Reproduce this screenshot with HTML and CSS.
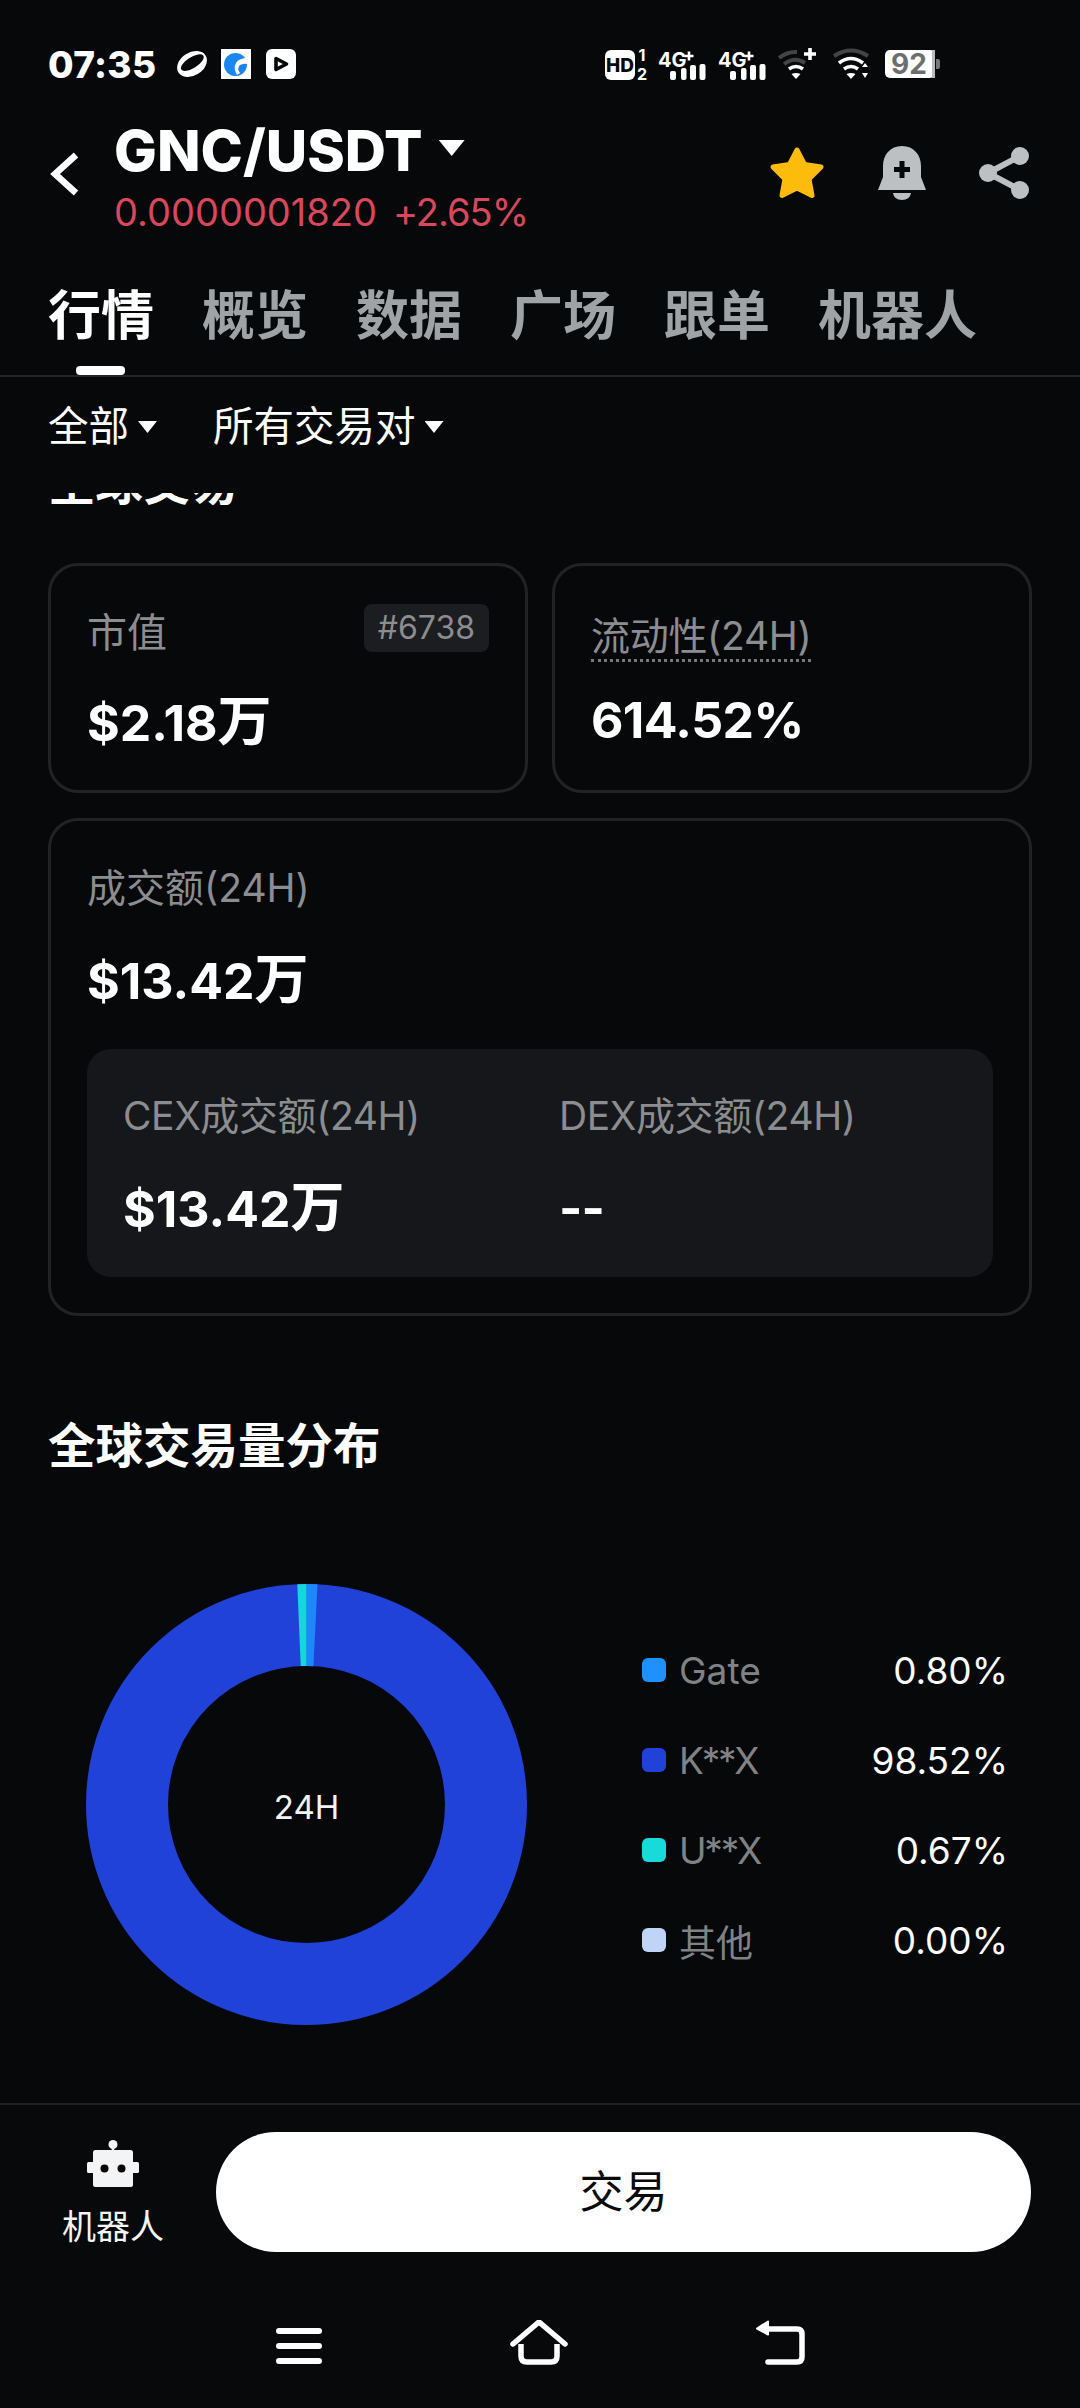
FILE: index.html
```html
<!DOCTYPE html>
<html lang="zh">
<head>
<meta charset="utf-8">
<title>GNC/USDT</title>
<link rel="stylesheet" href="styles.css">
</head>
<body>
<div class="app">
  <div class="status">
    <span class="time">07:35</span>
    <svg class="si orbit" width="32" height="30" viewBox="0 0 32 30"><g transform="rotate(-32 16 15)"><ellipse cx="16" cy="15" rx="16" ry="11.500" fill="#fff"/><ellipse cx="17" cy="14" rx="13" ry="5.500" fill="#060809"/></g></svg>
    <svg class="si blue" width="30" height="30" viewBox="0 0 30 30"><rect width="30" height="30" fill="#fff"/><circle cx="14.500" cy="15.500" r="11.500" fill="#1a86ee"/><path d="M27 9 Q18 9 15 14 Q12 19 16 26 L19 24 Q16 20 18.500 16.500 Q21 14 27 15Z" fill="#fff"/><path d="M17 20 L25 16.500 Q25 21 20 24Z" fill="#1a86ee"/></svg>
    <svg class="si play" width="30" height="30" viewBox="0 0 30 30"><rect width="30" height="30" rx="6" fill="#fff"/><path d="M10 9.500 L20.500 15 L10 20.500Z" fill="none" stroke="#060809" stroke-width="3.600" stroke-linejoin="round"/></svg>
    <span class="status-gap"></span>
    <svg class="si hd" width="43" height="44" viewBox="0 -7 43 44"><rect y="1" width="30" height="30" rx="6" fill="#fff"/><text x="15" y="23" class="hd-t">HD</text><text x="37" y="12" class="sim-t">1</text><text x="37" y="31" class="sim-t">2</text></svg>
    <svg class="si sig" width="48" height="44" viewBox="0 -7 48 44"><text x="0" y="18" class="g-t">4G</text><path d="M26.500 7h9M31 2.500v9" stroke="#fff" stroke-width="2.600"/><rect x="12" y="22" width="6" height="9" rx="2" fill="#fff"/><rect x="23" y="19" width="5.500" height="12" rx="2" fill="#fff"/><rect x="32" y="16" width="6" height="15" rx="2" fill="#fff"/><rect x="41.500" y="15" width="6" height="16" rx="2" fill="#fff"/></svg>
    <svg class="si sig2" width="48" height="44" viewBox="0 -7 48 44"><text x="0" y="18" class="g-t">4G</text><path d="M26.500 7h9M31 2.500v9" stroke="#fff" stroke-width="2.600"/><rect x="12" y="22" width="6" height="9" rx="2" fill="#fff"/><rect x="23" y="19" width="5.500" height="12" rx="2" fill="#fff"/><rect x="32" y="16" width="6" height="15" rx="2" fill="#fff"/><rect x="41.500" y="15" width="6" height="16" rx="2" fill="#fff"/></svg>
    <svg class="si wifi1" width="38" height="32" viewBox="0 0 38 32"><path d="M1 10 Q9 3.500 19 4" fill="none" stroke="#444" stroke-width="4"/><path d="M6 16 Q17 8 27 15" fill="none" stroke="#444" stroke-width="4"/><path d="M11 21 Q18 16 25 21" fill="none" stroke="#fff" stroke-width="3.600"/><path d="M13.500 26 L18 31 L22.500 26 Q18 24 13.500 26Z" fill="#fff"/><path d="M26 6h12M32 0v12" stroke="#fff" stroke-width="3.600"/></svg>
    <svg class="si wifi2" width="37" height="32" viewBox="0 0 37 32"><path d="M1 8 Q18 -3 35 8" fill="none" stroke="#444" stroke-width="4"/><path d="M6 15 Q18 6 30 15" fill="none" stroke="#fff" stroke-width="3.600"/><path d="M11 21 Q18 16 25 21" fill="none" stroke="#fff" stroke-width="3.600"/><path d="M13.500 26 L18 31 L22.500 26 Q18 24 13.500 26Z" fill="#fff"/><path d="M29 19 L32 15 L35 19Z M29 25 L32 30 L35 25Z" fill="#fff"/></svg>
    <svg class="si bat" width="55" height="44" viewBox="0 -8 55 44"><rect width="50" height="28" rx="5" fill="#fff"/><rect x="47" y="0" width="3" height="28" fill="#bbb"/><path d="M51 9h2q2 0 2 2v6q0 2-2 2h-2z" fill="#777"/><text x="24" y="24" class="bat-t">92</text></svg>
  </div>

  <header class="head">
    <svg class="back" width="30" height="44" viewBox="0 0 30 44"><path d="M26 3 L5 22 L26 41" fill="none" stroke="#fff" stroke-width="6.500"/></svg>
    <div class="pair">
      <div class="pair-title"><span class="pair-name">GNC/USDT</span><i class="caret caret-lg"></i></div>
      <div class="pair-price"><span>0.0000001820</span><span class="chg">+2.65%</span></div>
    </div>
    <div class="head-actions">
      <svg width="56" height="54" viewBox="0 0 56 54"><path d="M28 4 L35.500 18.500 L52 21 L40 33 L43 49.500 L28 42 L13 49.500 L16 33 L4 21 L20.500 18.500Z" fill="#fdbc0c" stroke="#fdbc0c" stroke-width="5" stroke-linejoin="round"/></svg>
      <svg width="48" height="54" viewBox="0 0 48 54"><path d="M24 0 C12 0 5 9 5 20 L5 31 L0 44 L48 44 L43 31 L43 20 C43 9 36 0 24 0Z" fill="#bcc0c3"/><path d="M15 47 H33 Q32 54 24 54 Q16 54 15 47Z" fill="#bcc0c3"/><path d="M24 15 V32 M16 23.500 H32" stroke="#060809" stroke-width="5"/></svg>
      <svg width="50" height="54" viewBox="0 0 50 54"><path d="M41 10 L9 27 L41 44" fill="none" stroke="#bcc0c3" stroke-width="6"/><circle cx="41" cy="10" r="9" fill="#bcc0c3"/><circle cx="9" cy="27" r="9" fill="#bcc0c3"/><circle cx="41" cy="44" r="9" fill="#bcc0c3"/></svg>
    </div>
  </header>

  <nav class="tabs">
    <span class="tab tab-on">行情</span>
    <span class="tab">概览</span>
    <span class="tab">数据</span>
    <span class="tab">广场</span>
    <span class="tab">跟单</span>
    <span class="tab">机器人</span>
  </nav>

  <div class="filters">
    <span class="filter">全部<i class="caret"></i></span>
    <span class="filter">所有交易对<i class="caret"></i></span>
  </div>

  <main class="main">
    <h2 class="sec sec-clipped">全球交易</h2>
    <div class="pair-cards">
      <section class="card">
        <div class="card-head"><span class="label">市值</span><span class="badge">#6738</span></div>
        <div class="value">$2.18<span class="unit">万</span></div>
      </section>
      <section class="card card-alt">
        <div class="card-head"><span class="label label-dotted">流动性(24H)</span></div>
        <div class="value value-alt">614.52%</div>
      </section>
    </div>
    <section class="card card-wide">
      <div class="label">成交额(24H)</div>
      <div class="value">$13.42<span class="unit">万</span></div>
      <div class="inner">
        <div>
          <div class="label">CEX成交额(24H)</div>
          <div class="value">$13.42<span class="unit">万</span></div>
        </div>
        <div>
          <div class="label">DEX成交额(24H)</div>
          <div class="value value-dash">--</div>
        </div>
      </div>
    </section>

    <h2 class="sec sec-dist">全球交易量分布</h2>
    <div class="dist">
      <div class="donut">
        <svg width="441" height="441" viewBox="0 0 441 441">
          <g transform="rotate(-90 220.500 220.500)" fill="none" stroke-width="82">
            <circle cx="220.500" cy="220.500" r="179.500" stroke="#2142d9"/>
            <circle cx="220.500" cy="220.500" r="179.500" stroke="#1e88fa" pathLength="100" stroke-dasharray="0.8 99.2"/>
            <circle cx="220.500" cy="220.500" r="179.500" stroke="#17d5de" pathLength="100" stroke-dasharray="0.67 99.33" stroke-dashoffset="0.67"/>
          </g>
        </svg>
        <span class="donut-label">24H</span>
      </div>
      <ul class="legend">
        <li class="legend-row"><i class="sw sw-gate"></i><span class="lg-name">Gate</span><span class="lg-val">0.80%</span></li>
        <li class="legend-row"><i class="sw sw-kx"></i><span class="lg-name lg-mask">K**X</span><span class="lg-val">98.52%</span></li>
        <li class="legend-row"><i class="sw sw-ux"></i><span class="lg-name lg-mask">U**X</span><span class="lg-val">0.67%</span></li>
        <li class="legend-row"><i class="sw sw-other"></i><span class="lg-name">其他</span><span class="lg-val">0.00%</span></li>
      </ul>
    </div>
  </main>

  <footer class="foot">
    <div class="foot-row">
      <div class="bot">
        <svg width="52" height="47" viewBox="0 0 52 47"><circle cx="26" cy="4.500" r="4.500" fill="#f4f4f5"/><rect x="24.800" y="6" width="2.400" height="6" fill="#f4f4f5"/><rect x="6" y="10" width="40" height="37" rx="2.500" fill="#f4f4f5"/><rect x="0" y="22" width="52" height="11" rx="1.500" fill="#f4f4f5"/><circle cx="17.500" cy="28.500" r="4" fill="#060809"/><circle cx="34.500" cy="28.500" r="4" fill="#060809"/></svg>
        <span class="bot-t">机器人</span>
      </div>
      <button class="trade">交易</button>
    </div>
    <div class="sysnav">
      <svg width="46" height="46" viewBox="0 0 46 46"><path d="M3 11H43M3 26H43M3 41H43" stroke="#fff" stroke-width="6" stroke-linecap="round"/></svg>
      <svg width="58" height="46" viewBox="0 0 58 46"><path d="M3 24 L29 2 L55 24" fill="none" stroke="#fff" stroke-width="5.500" stroke-linecap="round" stroke-linejoin="round"/><path d="M11 24 V36 Q11 42 17 42 H41 Q47 42 47 36 V24" fill="none" stroke="#fff" stroke-width="5.500"/></svg>
      <svg width="49" height="46" viewBox="0 0 49 46"><path d="M10 9 H41 Q46 9 46 14 V37 Q46 42 41 42 H12" fill="none" stroke="#fff" stroke-width="5.500" stroke-linecap="round"/><path d="M12 1.500 L1 8.500 L12 14.500Z" fill="#fff" stroke="#fff" stroke-width="2" stroke-linejoin="round"/></svg>
    </div>
  </footer>
</div>
</body>
</html>
```

FILE: styles.css
```css
* { box-sizing: border-box; }
html, body { margin: 0; padding: 0; background: #060809; }
body { font-family: Inter, "Noto Sans CJK SC", sans-serif; color: #fff; }
h2, ul { margin: 0; padding: 0; }
ul { list-style: none; }
i { display: block; }

.app { width: 1080px; height: 2408px; display: flex; flex-direction: column; overflow: hidden; background: #060809; }

.status { height: 120px; padding: 8px 0 0 48px; display: flex; align-items: center; flex: none; }
.time { font-size: 37px; font-weight: 800; width: 128px; letter-spacing: 0.3px; }
.si { flex: none; display: block; }
.blue { margin-left: 13px; }
.play { margin-left: 15px; }
.status-gap { width: 309px; }
.sig { margin-left: 10px; }
.sig2 { margin-left: 12px; }
.wifi1 { margin-left: 12px; }
.wifi2 { margin-left: 17px; }
.bat { margin-left: 15px; }
.hd-t { font: 800 19px Inter, sans-serif; fill: #060809; text-anchor: middle; }
.sim-t { font: 700 16px Inter, sans-serif; fill: #fff; text-anchor: middle; }
.g-t { font: 700 20px Inter, sans-serif; fill: #fff; }
.bat-t { font: 700 28px Inter, sans-serif; fill: #6e6e6e; text-anchor: middle; }

.head { height: 120px; flex: none; display: flex; padding: 0 51px 0 50px; }
.back { margin-top: 32px; flex: none; }
.pair { margin-left: 34px; flex: 1; }
.pair-title { display: flex; align-items: center; height: 60px; }
.pair-name { font-size: 57px; font-weight: 800; line-height: 60px; position: relative; top: 1px; }
.caret { width: 19px; height: 12px; background: #fff; clip-path: polygon(0 0, 100% 0, 50% 100%); }
.caret-lg { width: 26px; height: 16px; margin: -4px 0 0 16px; }
.pair-price { margin-top: 8px; height: 48px; line-height: 48px; font-size: 38px; color: #d9475c; display: flex; gap: 16px; }
.chg { letter-spacing: -1px; }
.head-actions { display: flex; gap: 53px; margin-top: 26px; height: 54px; }

.tabs { height: 137px; flex: none; padding: 46px 0 0 48px; display: flex; gap: 48px; border-bottom: 2px solid #232527; }
.tab { font-size: 53px; line-height: 60px; font-weight: 700; color: #a0a3a6; height: 60px; position: relative; }
.tab-on { color: #fff; }
.tab-on::after { content: ""; position: absolute; left: 28px; width: 49px; top: 80px; height: 9px; border-radius: 4px; background: #fff; }

.filters { height: 116px; flex: none; padding: 20px 0 0 48px; display: flex; gap: 56px; }
.filter { font-size: 40.5px; line-height: 60px; height: 60px; display: flex; align-items: center; gap: 9px; }

.main { flex: 1; overflow: hidden; padding: 0 48px; min-height: 0; }
.sec { font-size: 47.5px; font-weight: 700; line-height: 68px; height: 68px; }
.sec-clipped { margin-top: -44px; margin-bottom: 46px; }
.sec-dist { margin-top: 96px; }

.pair-cards { display: grid; grid-template-columns: 480px 480px; gap: 24px; }
.card { border: 3px solid #212325; border-radius: 30px; height: 230px; padding: 39px 36px 0; }
.card-alt { padding-top: 42px; }
.card-head { display: flex; justify-content: space-between; align-items: flex-start; }
.label { font-size: 39px; line-height: 56px; height: 56px; color: #8b8d90; }
.card-head .label { font-size: 40px; }
.badge { margin-top: -1px; height: 48px; line-height: 48px; padding: 0 14px; border-radius: 8px; background: #1c1d20; color: #8b8d90; font-size: 32px; }
.card-head .label-dotted { display: inline-block; font-size: 39px; line-height: 44px; height: 50px; margin-top: 6px; position: relative; letter-spacing: -0.3px; }
.label-dotted::after { content: ""; position: absolute; left: 0; right: 0; top: 45px; border-top: 3px dotted #77797c; }
.value { font-size: 50px; font-weight: 700; line-height: 60px; height: 60px; margin-top: 31px; }
.unit { font-size: 54px; }
.card-alt .value-alt { margin-top: 26px; letter-spacing: -0.6px; }
.value-dash { letter-spacing: -1px; }
.card-wide { margin-top: 25px; height: 498px; padding: 39px 36px 0; }
.card-wide > .value { margin-top: 34px; }
.inner { margin-top: 39px; height: 228px; border-radius: 24px; background: #16171a; padding: 39px 36px 0; display: grid; grid-template-columns: 436px 1fr; }
.inner .label { letter-spacing: -0.4px; }
.inner .value { margin-top: 34px; }

.dist { margin-top: 104px; margin-left: 38px; display: flex; align-items: center; height: 441px; }
.donut { width: 441px; height: 441px; position: relative; flex: none; }
.donut svg { display: block; }
.donut-label { position: absolute; left: 0; right: 0; top: 203px; line-height: 40px; text-align: center; font-size: 33px; color: #f2f2f2; }
.legend { margin-left: 115px; width: 366px; position: relative; top: 1px; }
.legend-row { height: 90px; display: flex; align-items: center; font-size: 37px; }
.sw { width: 24px; height: 24px; border-radius: 6px; flex: none; position: relative; top: -1px; }
.sw-gate { background: #1e90ff; }
.sw-kx { background: #2142d9; }
.sw-ux { background: #17dbdb; }
.sw-other { background: #c0d4f8; }
.lg-name { margin-left: 13px; color: #808285; flex: 1; }
.lg-mask { letter-spacing: -2.2px; }
.lg-val { color: #fff; }

.foot { flex: none; height: 305px; border-top: 2px solid #1f2123; background: #07090a; }
.foot-row { display: flex; padding: 27px 49px 0 48px; height: 147px; }
.bot { width: 130px; margin-right: 38px; display: flex; flex-direction: column; align-items: center; padding-top: 8px; flex: none; }
.bot svg { display: block; flex: none; }
.bot-t { font-size: 34px; line-height: 44px; margin-top: 18px; color: #f4f4f5; }
.trade { flex: 1; height: 120px; border: 0; border-radius: 60px; background: #fff; color: #0a0a0a; font-family: inherit; font-size: 44px; padding: 0 0 6px; }
.sysnav { display: flex; justify-content: center; gap: 188px; padding-top: 68px; }
```
